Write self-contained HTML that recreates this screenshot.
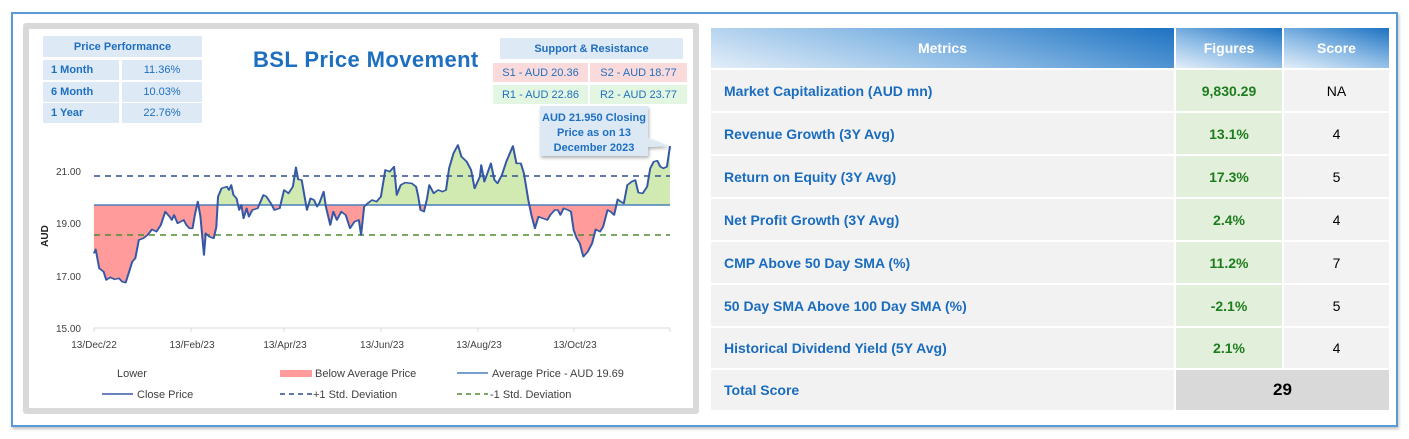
<!DOCTYPE html>
<html><head><meta charset="utf-8"><style>
*{margin:0;padding:0;box-sizing:border-box}
body{width:1409px;height:439px;background:#fff;position:relative;overflow:hidden;font-family:"Liberation Sans",sans-serif}
.a{position:absolute}
.frame{left:11px;top:12px;width:1387px;height:415px;border:2px solid #5b9bd5;box-shadow:1px 2px 3px rgba(0,0,0,.25)}
.panel{left:23px;top:23px;width:676px;height:391px;border:6px solid #d9d9d9;border-radius:3px;background:#fff}
.c{display:flex;align-items:center;justify-content:center;font-size:11px;color:#1f6fc0}
.pp{background:#dde9f5}
.b{font-weight:bold}
.t{font-size:14px;font-weight:bold}
.hd{color:#fff;background:linear-gradient(15deg,#e3eef9 0%,#8fbde6 45%,#1d72c2 100%)}
.m{background:#f2f2f2;justify-content:flex-start;padding-left:13px;color:#1a6cbf}
.f{background:#e2efda;color:#1e7d1e}
.s{background:#f2f2f2;color:#000;font-size:14px}
</style></head><body>
<div class="a frame"></div>
<div class="a panel"></div>

<div class="a c pp b" style="left:43px;top:36px;width:159px;height:21px">Price Performance</div>
<div class="a c pp b" style="left:43px;top:60px;width:76px;height:20px;justify-content:flex-start;padding-left:8px">1 Month</div>
<div class="a c pp" style="left:122px;top:60px;width:80px;height:20px">11.36%</div>
<div class="a c pp b" style="left:43px;top:82px;width:76px;height:20px;justify-content:flex-start;padding-left:8px">6 Month</div>
<div class="a c pp" style="left:122px;top:82px;width:80px;height:20px">10.03%</div>
<div class="a c pp b" style="left:43px;top:103px;width:76px;height:20px;justify-content:flex-start;padding-left:8px">1 Year</div>
<div class="a c pp" style="left:122px;top:103px;width:80px;height:20px">22.76%</div>

<div class="a" style="left:253px;top:47px;font-size:22px;letter-spacing:0.4px;font-weight:bold;color:#1f6fc0;white-space:nowrap">BSL Price Movement</div>

<div class="a c pp b" style="left:500px;top:38px;width:183px;height:21px">Support &amp; Resistance</div>
<div class="a c" style="left:493px;top:63px;width:95px;height:19px;background:#fadadb">S1 - AUD 20.36</div>
<div class="a c" style="left:590px;top:63px;width:97px;height:19px;background:#fadadb">S2 - AUD 18.77</div>
<div class="a c" style="left:493px;top:85px;width:95px;height:19px;background:#e2f6e2">R1 - AUD 22.86</div>
<div class="a c" style="left:590px;top:85px;width:97px;height:19px;background:#e2f6e2">R2 - AUD 23.77</div>

<svg class="a" style="left:0;top:0" width="1409" height="439">
<defs>
<filter id="sh"><feDropShadow dx="1" dy="2" stdDeviation="1.5" flood-opacity=".3"/></filter>
<clipPath id="cu"><rect x="0" y="0" width="1409" height="205"/></clipPath>
<clipPath id="cd"><rect x="0" y="205" width="1409" height="300"/></clipPath>
<path id="A" d="M168,195 L168,340 L172,328 L180,385 L190,395 L196,420 L205,412 L215,418 L225,415 L232,425 L240,428 L248,395 L255,365 L262,355 L270,300 L280,295 L290,285 L300,268 L310,275 L320,255 L330,215 L340,230 L345,240 L350,225 L358,250 L365,245 L372,240 L378,255 L385,265 L392,265 L398,220 L404,185 L410,230 L418,345 L422,280 L430,290 L440,295 L446,262 L450,170 L458,145 L470,140 L475,150 L480,135 L485,165 L492,175 L498,210 L503,195 L508,235 L515,205 L520,230 L528,210 L540,205 L553,165 L560,170 L570,190 L578,210 L590,205 L600,150 L610,160 L620,140 L627,82 L632,118 L640,120 L648,180 L652,210 L660,175 L668,180 L675,200 L680,190 L690,155 L695,200 L705,255 L712,215 L720,240 L730,215 L740,225 L750,265 L760,245 L770,240 L775,285 L782,200 L790,190 L800,180 L810,185 L820,170 L830,90 L840,95 L850,80 L856,165 L865,135 L875,128 L890,130 L900,140 L905,170 L910,210 L918,215 L925,175 L930,135 L940,160 L950,150 L960,155 L968,150 L975,85 L985,40 L995,15 L1003,50 L1015,65 L1025,90 L1033,145 L1045,110 L1048,75 L1055,125 L1062,100 L1070,70 L1078,120 L1085,130 L1095,105 L1105,65 L1120,18 L1128,70 L1138,70 L1145,100 L1155,180 L1162,225 L1170,265 L1178,230 L1188,235 L1198,240 L1205,225 L1215,210 L1222,210 L1228,225 L1235,205 L1245,210 L1252,215 L1258,270 L1265,295 L1272,310 L1280,350 L1290,335 L1300,310 L1308,268 L1318,275 L1325,260 L1335,210 L1342,215 L1350,225 L1358,178 L1365,185 L1372,190 L1380,135 L1390,125 L1398,120 L1405,158 L1415,160 L1425,140 L1432,85 L1440,65 L1448,62 L1455,80 L1462,85 L1470,80 L1477,18 L1477,195 Z"/>
<path id="P" d="M168,340 L172,328 L180,385 L190,395 L196,420 L205,412 L215,418 L225,415 L232,425 L240,428 L248,395 L255,365 L262,355 L270,300 L280,295 L290,285 L300,268 L310,275 L320,255 L330,215 L340,230 L345,240 L350,225 L358,250 L365,245 L372,240 L378,255 L385,265 L392,265 L398,220 L404,185 L410,230 L418,345 L422,280 L430,290 L440,295 L446,262 L450,170 L458,145 L470,140 L475,150 L480,135 L485,165 L492,175 L498,210 L503,195 L508,235 L515,205 L520,230 L528,210 L540,205 L553,165 L560,170 L570,190 L578,210 L590,205 L600,150 L610,160 L620,140 L627,82 L632,118 L640,120 L648,180 L652,210 L660,175 L668,180 L675,200 L680,190 L690,155 L695,200 L705,255 L712,215 L720,240 L730,215 L740,225 L750,265 L760,245 L770,240 L775,285 L782,200 L790,190 L800,180 L810,185 L820,170 L830,90 L840,95 L850,80 L856,165 L865,135 L875,128 L890,130 L900,140 L905,170 L910,210 L918,215 L925,175 L930,135 L940,160 L950,150 L960,155 L968,150 L975,85 L985,40 L995,15 L1003,50 L1015,65 L1025,90 L1033,145 L1045,110 L1048,75 L1055,125 L1062,100 L1070,70 L1078,120 L1085,130 L1095,105 L1105,65 L1120,18 L1128,70 L1138,70 L1145,100 L1155,180 L1162,225 L1170,265 L1178,230 L1188,235 L1198,240 L1205,225 L1215,210 L1222,210 L1228,225 L1235,205 L1245,210 L1252,215 L1258,270 L1265,295 L1272,310 L1280,350 L1290,335 L1300,310 L1308,268 L1318,275 L1325,260 L1335,210 L1342,215 L1350,225 L1358,178 L1365,185 L1372,190 L1380,135 L1390,125 L1398,120 L1405,158 L1415,160 L1425,140 L1432,85 L1440,65 L1448,62 L1455,80 L1462,85 L1470,80 L1477,18"/>
</defs>
<path d="M540 106 H648 V138 L669 146 L648 147 V156 H540 Z" fill="#dce9f5" filter="url(#sh)"/>
<text font-family="Liberation Sans" font-size="11" font-weight="bold" fill="#1f6fc0" text-anchor="middle">
<tspan x="594" y="121">AUD 21.950 Closing</tspan><tspan x="594" y="136">Price as on 13</tspan><tspan x="594" y="151">December 2023</tspan></text>
<line x1="94" y1="328" x2="670" y2="328" stroke="#d9d9d9"/>
<g stroke="#d9d9d9"><line x1="94" y1="328" x2="94" y2="332"/><line x1="191" y1="328" x2="191" y2="332"/><line x1="284" y1="328" x2="284" y2="332"/><line x1="381" y1="328" x2="381" y2="332"/><line x1="478" y1="328" x2="478" y2="332"/><line x1="574" y1="328" x2="574" y2="332"/><line x1="670" y1="328" x2="670" y2="332"/></g>
<g clip-path="url(#cu)"><g transform="translate(20,140) scale(0.4401,0.3333)"><use href="#A" fill="#d1eab2"/></g></g>
<g clip-path="url(#cd)"><g transform="translate(20,140) scale(0.4401,0.3333)"><use href="#A" fill="#ff9b9b"/></g></g>
<line x1="94" y1="205" x2="670" y2="205" stroke="#4a7ebb" stroke-width="1.5"/>
<line x1="94" y1="176" x2="670" y2="176" stroke="#2f4f8f" stroke-width="1.5" stroke-dasharray="6,5"/>
<line x1="94" y1="235" x2="670" y2="235" stroke="#4e8a2e" stroke-width="1.5" stroke-dasharray="6,5"/>
<g transform="translate(20,140) scale(0.4401,0.3333)"><use href="#P" fill="none" stroke="#3558a6" stroke-width="4.6" stroke-linejoin="round"/></g>
<g font-family="Liberation Sans" font-size="10" fill="#404040" text-anchor="end">
<text x="81" y="175">21.00</text><text x="81" y="227">19.00</text><text x="81" y="280">17.00</text><text x="81" y="332">15.00</text></g>
<text transform="translate(48,236) rotate(-90)" font-family="Liberation Sans" font-size="10" font-weight="bold" fill="#222" text-anchor="middle">AUD</text>
<g font-family="Liberation Sans" font-size="10" fill="#404040" text-anchor="middle">
<text x="94" y="348">13/Dec/22</text><text x="192" y="348">13/Feb/23</text><text x="285" y="348">13/Apr/23</text><text x="382" y="348">13/Jun/23</text><text x="479" y="348">13/Aug/23</text><text x="575" y="348">13/Oct/23</text></g>
<rect x="280" y="370" width="32" height="7" fill="#ff9b9b"/>
<line x1="457" y1="373" x2="488" y2="373" stroke="#4a7ebb" stroke-width="1.5"/>
<line x1="102" y1="394" x2="133" y2="394" stroke="#3558a6" stroke-width="1.5"/>
<line x1="280" y1="394" x2="312" y2="394" stroke="#2f4f8f" stroke-width="1.5" stroke-dasharray="5,4"/>
<line x1="457" y1="394" x2="488" y2="394" stroke="#4e8a2e" stroke-width="1.5" stroke-dasharray="5,4"/>
<g font-family="Liberation Sans" font-size="11" fill="#404040">
<text x="117" y="377">Lower</text><text x="315" y="377">Below Average Price</text><text x="492" y="377">Average Price - AUD 19.69</text>
<text x="137" y="398">Close Price</text><text x="313" y="398">+1 Std. Deviation</text><text x="490" y="398">-1 Std. Deviation</text></g>
</svg>

<div class="a c t hd" style="left:711px;top:28px;width:463px;height:40px">Metrics</div>
<div class="a c t hd" style="left:1176px;top:28px;width:106px;height:40px">Figures</div>
<div class="a c t hd" style="left:1284px;top:28px;width:105px;height:40px">Score</div>

<div class="a c t m" style="left:711px;top:70px;width:463px;height:41px">Market Capitalization (AUD mn)</div>
<div class="a c t f" style="left:1176px;top:70px;width:106px;height:41px">9,830.29</div>
<div class="a c s" style="left:1284px;top:70px;width:105px;height:41px">NA</div>

<div class="a c t m" style="left:711px;top:113px;width:463px;height:41px">Revenue Growth (3Y Avg)</div>
<div class="a c t f" style="left:1176px;top:113px;width:106px;height:41px">13.1%</div>
<div class="a c s" style="left:1284px;top:113px;width:105px;height:41px">4</div>

<div class="a c t m" style="left:711px;top:156px;width:463px;height:41px">Return on Equity (3Y Avg)</div>
<div class="a c t f" style="left:1176px;top:156px;width:106px;height:41px">17.3%</div>
<div class="a c s" style="left:1284px;top:156px;width:105px;height:41px">5</div>

<div class="a c t m" style="left:711px;top:199px;width:463px;height:41px">Net Profit Growth (3Y Avg)</div>
<div class="a c t f" style="left:1176px;top:199px;width:106px;height:41px">2.4%</div>
<div class="a c s" style="left:1284px;top:199px;width:105px;height:41px">4</div>

<div class="a c t m" style="left:711px;top:242px;width:463px;height:41px">CMP Above 50 Day SMA (%)</div>
<div class="a c t f" style="left:1176px;top:242px;width:106px;height:41px">11.2%</div>
<div class="a c s" style="left:1284px;top:242px;width:105px;height:41px">7</div>

<div class="a c t m" style="left:711px;top:285px;width:463px;height:41px">50 Day SMA Above 100 Day SMA (%)</div>
<div class="a c t f" style="left:1176px;top:285px;width:106px;height:41px">-2.1%</div>
<div class="a c s" style="left:1284px;top:285px;width:105px;height:41px">5</div>

<div class="a c t m" style="left:711px;top:328px;width:463px;height:40px">Historical Dividend Yield (5Y Avg)</div>
<div class="a c t f" style="left:1176px;top:328px;width:106px;height:40px">2.1%</div>
<div class="a c s" style="left:1284px;top:328px;width:105px;height:40px">4</div>

<div class="a c t m" style="left:711px;top:370px;width:463px;height:40px">Total Score</div>
<div class="a c" style="left:1176px;top:370px;width:213px;height:40px;background:#d9d9d9;color:#000;font-size:17px;font-weight:bold">29</div>
</body></html>
